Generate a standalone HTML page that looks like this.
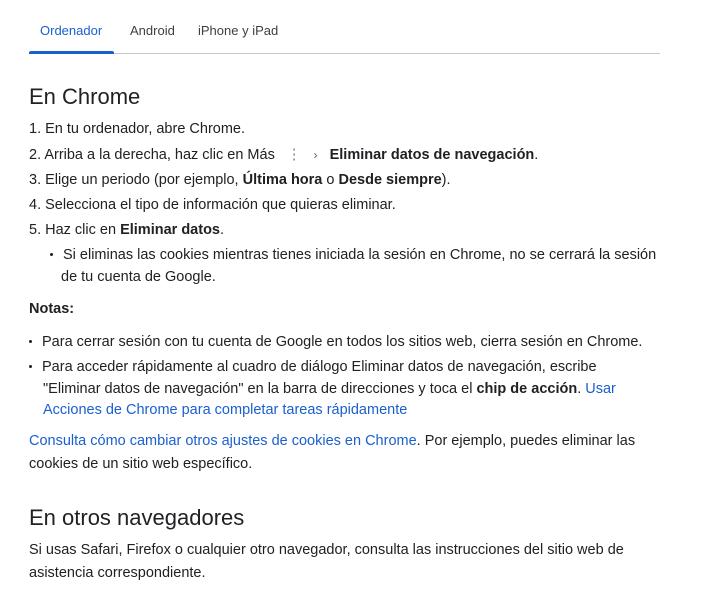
<!DOCTYPE html>
<html><head><meta charset="utf-8"><style>
body{margin:0;width:702px;height:607px;background:#fff;font-family:"Liberation Sans",Arial,sans-serif;color:#202124;position:relative;overflow:hidden}
.l{position:absolute;font-size:14.5px;line-height:20px;white-space:nowrap}
b{font-weight:bold}
a{color:#1a5fd0;text-decoration:none}
.h{position:absolute;left:29px;font-size:22px;line-height:28px;color:#202124}
.tab{position:absolute;top:21px;font-size:13px;line-height:20px;color:#3c4043}
.dot{display:inline-block;width:3px;height:3px;border-radius:50%;background:#202124;margin-right:10px;vertical-align:middle;position:relative;top:-1px}
</style></head><body>
<div class="tab" style="left:40px;color:#1a5fd0">Ordenador</div>
<div class="tab" style="left:130px">Android</div>
<div class="tab" style="left:198px">iPhone y iPad</div>
<div style="position:absolute;left:29px;top:53px;width:631px;height:1px;background:#c4c7c5"></div>
<div style="position:absolute;left:29px;top:51px;width:85px;height:3px;background:#1a5fd0;border-radius:2px 2px 0 0"></div>

<div class="h" style="top:83px">En Chrome</div>
<div class="l" style="left:29px;top:119px">1. En tu ordenador, abre Chrome.</div>
<div class="l" style="left:29px;top:145px">2. Arriba a la derecha, haz clic en Más <span style="color:#80868b">&nbsp;&nbsp;⋮&nbsp;&nbsp;&nbsp;</span><span style="color:#5f6368;font-size:12px">›</span>&nbsp;&nbsp; <b>Eliminar datos de navegación</b>.</div>
<div class="l" style="left:29px;top:170px">3. Elige un periodo (por ejemplo, <b>Última hora</b> o <b>Desde siempre</b>).</div>
<div class="l" style="left:29px;top:195px">4. Selecciona el tipo de información que quieras eliminar.</div>
<div class="l" style="left:29px;top:220px">5. Haz clic en <b>Eliminar datos</b>.</div>
<div class="l" style="left:50px;top:245px"><span class="dot"></span>Si eliminas las cookies mientras tienes iniciada la sesión en Chrome, no se cerrará la sesión</div>
<div class="l" style="left:61px;top:267px">de tu cuenta de Google.</div>
<div class="l" style="left:29px;top:299px"><b>Notas:</b></div>
<div class="l" style="left:29px;top:332px"><span class="dot"></span>Para cerrar sesión con tu cuenta de Google en todos los sitios web, cierra sesión en Chrome.</div>
<div class="l" style="left:29px;top:357px"><span class="dot"></span>Para acceder rápidamente al cuadro de diálogo Eliminar datos de navegación, escribe</div>
<div class="l" style="left:43px;top:379px">"Eliminar datos de navegación" en la barra de direcciones y toca el <b>chip de acción</b>. <a>Usar</a></div>
<div class="l" style="left:43px;top:400px"><a>Acciones de Chrome para completar tareas rápidamente</a></div>
<div class="l" style="left:29px;top:431px"><a>Consulta cómo cambiar otros ajustes de cookies en Chrome</a>. Por ejemplo, puedes eliminar las</div>
<div class="l" style="left:29px;top:454px">cookies de un sitio web específico.</div>
<div class="h" style="top:504px">En otros navegadores</div>
<div class="l" style="left:29px;top:540px">Si usas Safari, Firefox o cualquier otro navegador, consulta las instrucciones del sitio web de</div>
<div class="l" style="left:29px;top:563px">asistencia correspondiente.</div>
</body></html>
